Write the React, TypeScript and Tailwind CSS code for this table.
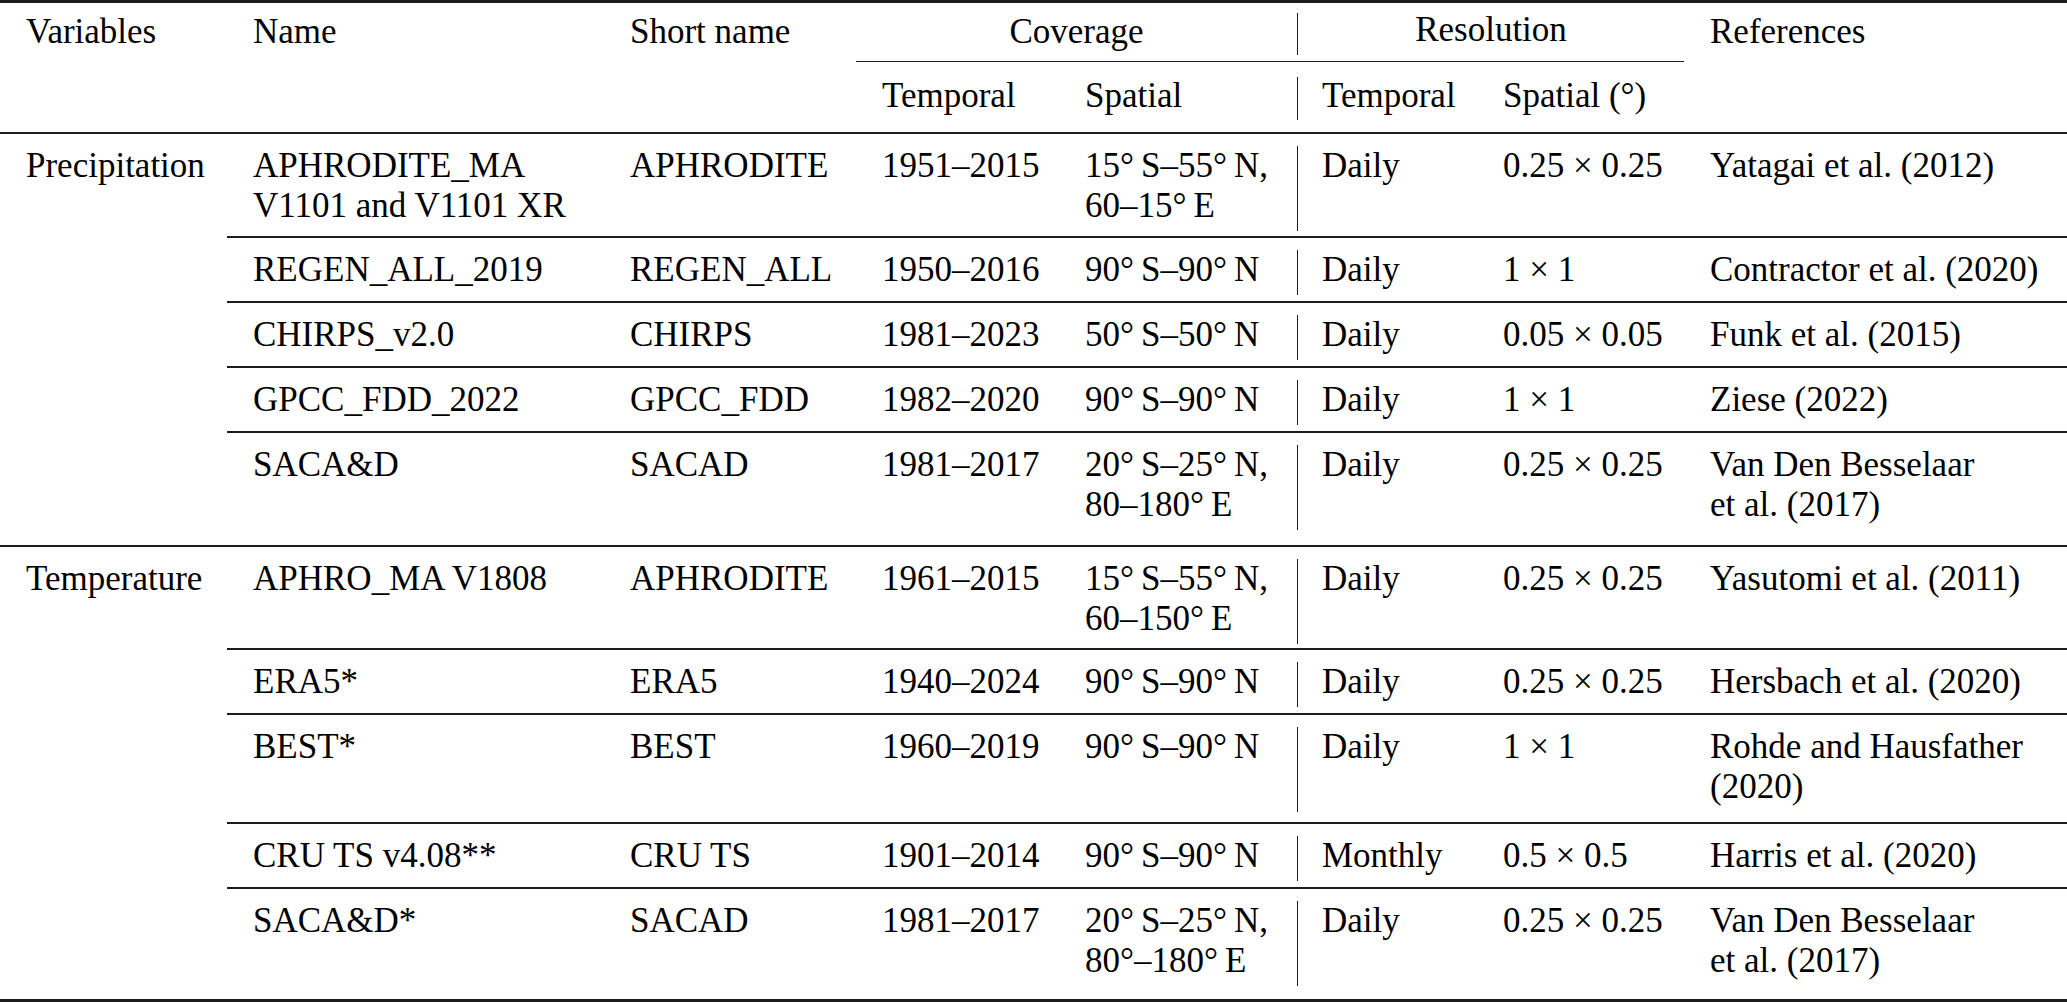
type Row = {
  name: string[];
  short: string;
  temporal: string;
  spatial: string[];
  resTemporal: string;
  resSpatial: string;
  refs: string[];
  pb: string;
};

const precipitation: Row[] = [
  {
    name: ['APHRODITE_MA', 'V1101 and V1101 XR'],
    short: 'APHRODITE',
    temporal: '1951–2015',
    spatial: ['15°\u2009S–55°\u2009N,', '60–15°\u2009E'],
    resTemporal: 'Daily',
    resSpatial: '0.25 × 0.25',
    refs: ['Yatagai et al. (2012)'],
    pb: 'pb-[10px]',
  },
  {
    name: ['REGEN_ALL_2019'],
    short: 'REGEN_ALL',
    temporal: '1950–2016',
    spatial: ['90°\u2009S–90°\u2009N'],
    resTemporal: 'Daily',
    resSpatial: '1 × 1',
    refs: ['Contractor et al. (2020)'],
    pb: 'pb-[11px]',
  },
  {
    name: ['CHIRPS_v2.0'],
    short: 'CHIRPS',
    temporal: '1981–2023',
    spatial: ['50°\u2009S–50°\u2009N'],
    resTemporal: 'Daily',
    resSpatial: '0.05 × 0.05',
    refs: ['Funk et al. (2015)'],
    pb: 'pb-[11px]',
  },
  {
    name: ['GPCC_FDD_2022'],
    short: 'GPCC_FDD',
    temporal: '1982–2020',
    spatial: ['90°\u2009S–90°\u2009N'],
    resTemporal: 'Daily',
    resSpatial: '1 × 1',
    refs: ['Ziese (2022)'],
    pb: 'pb-[11px]',
  },
  {
    name: ['SACA&D'],
    short: 'SACAD',
    temporal: '1981–2017',
    spatial: ['20°\u2009S–25°\u2009N,', '80–180°\u2009E'],
    resTemporal: 'Daily',
    resSpatial: '0.25 × 0.25',
    refs: ['Van Den Besselaar', 'et al. (2017)'],
    pb: 'pb-[20px]',
  },
];

const temperature: Row[] = [
  {
    name: ['APHRO_MA V1808'],
    short: 'APHRODITE',
    temporal: '1961–2015',
    spatial: ['15°\u2009S–55°\u2009N,', '60–150°\u2009E'],
    resTemporal: 'Daily',
    resSpatial: '0.25 × 0.25',
    refs: ['Yasutomi et al. (2011)'],
    pb: 'pb-[9px]',
  },
  {
    name: ['ERA5*'],
    short: 'ERA5',
    temporal: '1940–2024',
    spatial: ['90°\u2009S–90°\u2009N'],
    resTemporal: 'Daily',
    resSpatial: '0.25 × 0.25',
    refs: ['Hersbach et al. (2020)'],
    pb: 'pb-[11px]',
  },
  {
    name: ['BEST*'],
    short: 'BEST',
    temporal: '1960–2019',
    spatial: ['90°\u2009S–90°\u2009N'],
    resTemporal: 'Daily',
    resSpatial: '1 × 1',
    refs: ['Rohde and Hausfather', '(2020)'],
    pb: 'pb-[15px]',
  },
  {
    name: ['CRU TS v4.08**'],
    short: 'CRU TS',
    temporal: '1901–2014',
    spatial: ['90°\u2009S–90°\u2009N'],
    resTemporal: 'Monthly',
    resSpatial: '0.5 × 0.5',
    refs: ['Harris et al. (2020)'],
    pb: 'pb-[11px]',
  },
  {
    name: ['SACA&D*'],
    short: 'SACAD',
    temporal: '1981–2017',
    spatial: ['20°\u2009S–25°\u2009N,', '80°–180°\u2009E'],
    resTemporal: 'Daily',
    resSpatial: '0.25 × 0.25',
    refs: ['Van Den Besselaar', 'et al. (2017)'],
    pb: 'pb-[18px]',
  },
];

export default function App() {
  return (
    <div className="h-[1002px] w-[2067px] overflow-hidden bg-white font-['Liberation_Serif','Times_New_Roman',serif] text-[35px] leading-[40px] text-black">
      <div className="h-[3px] bg-[#1c1c1c]" />
      <Header />
      <div className="h-[2px] bg-[#1c1c1c]" />
      <Group label="Precipitation" rows={precipitation} />
      <div className="h-[2px] bg-[#1c1c1c]" />
      <Group label="Temperature" rows={temperature} />
      <div className="h-[3px] bg-[#1c1c1c]" />
    </div>
  );
}

function Header() {
  return (
    <div className="grid grid-cols-[227px_377px_252px_203px_238px_180px_207px_383px] grid-rows-[58px_71px] whitespace-nowrap">
      <div className="row-span-2 pl-[26px] pt-[9px]">Variables</div>
      <div className="row-span-2 pl-[26px] pt-[9px]">Name</div>
      <div className="row-span-2 pl-[26px] pt-[9px]">Short name</div>
      <div className="col-span-2 pt-[9px] text-center">Coverage</div>
      <div className="col-span-2 flex pt-[10px] pb-[6px]">
        <div className="flex-1 border-l border-[#1c1c1c] text-center leading-[34px]">Resolution</div>
      </div>
      <div className="row-span-2 pl-[26px] pt-[9px]">References</div>

      <div className="border-t-[1.5px] border-[#1c1c1c] pl-[26px] pt-[14px]">Temporal</div>
      <div className="border-t-[1.5px] border-[#1c1c1c] pl-[26px] pt-[14px]">Spatial</div>
      <div className="flex border-t-[1.5px] border-[#1c1c1c] pt-[15px] pb-[12px]">
        <div className="flex-1 border-l border-[#1c1c1c] pl-[24px] leading-[38px]">Temporal</div>
      </div>
      <div className="border-t-[1.5px] border-[#1c1c1c] pl-[26px] pt-[14px]">Spatial (°)</div>
    </div>
  );
}

function Group({ label, rows }: { label: string; rows: Row[] }) {
  return (
    <div>
      {rows.map((row, i) => (
        <div key={row.name.join(' ')}>
          {i > 0 && <div className="ml-[227px] h-[2px] bg-[#1c1c1c]" />}
          <DataRow label={i === 0 ? label : ''} row={row} />
        </div>
      ))}
    </div>
  );
}

function Lines({ lines }: { lines: string[] }) {
  return (
    <>
      {lines.map((line, i) => (
        <div key={i}>{line}</div>
      ))}
    </>
  );
}

function DataRow({ label, row }: { label: string; row: Row }) {
  return (
    <div
      className={`grid grid-cols-[227px_377px_252px_203px_238px_180px_207px_383px] whitespace-nowrap pt-[12px] ${row.pb}`}
    >
      <div className="pl-[26px]">{label}</div>
      <div className="pl-[26px]">
        <Lines lines={row.name} />
      </div>
      <div className="pl-[26px]">{row.short}</div>
      <div className="pl-[26px]">{row.temporal}</div>
      <div className="pl-[26px]">
        <Lines lines={row.spatial} />
      </div>
      <div className="-mb-[5px] border-l border-[#1c1c1c] pl-[24px]">{row.resTemporal}</div>
      <div className="pl-[26px]">{row.resSpatial}</div>
      <div className="pl-[26px]">
        <Lines lines={row.refs} />
      </div>
    </div>
  );
}
